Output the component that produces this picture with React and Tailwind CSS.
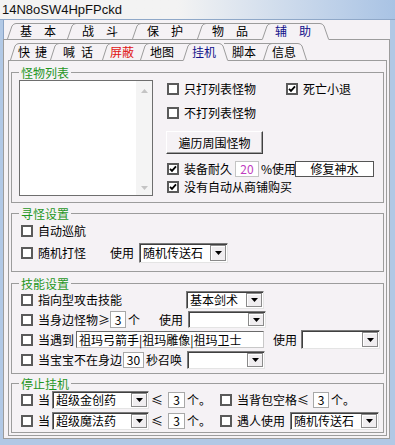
import React from 'react';

const BG = '#f5f2f5';
const LINE = '#9c9c9c';

// one slanted tab; w is the svg width in px, cls carries the matching tailwind width/padding
const Tab = ({ w, h, t, cls, label, color = 'text-black', selected, right, noLeft, spacing = '' }) => {
  const y = t + 0.5;
  let d = noLeft ? `M-4 ${y}` : `M0.5 ${h} L5 ${t + 3} Q6.5 ${y} 9 ${y}`;
  if (right || selected) d += ` L${w - 9} ${y} Q${w - 6.5} ${y} ${w - 5} ${t + 3} L${w - 0.5} ${h}`;
  else d += ` L${w + 9} ${y}`;
  const fill = `M0.5 ${h + 1} L0.5 ${h} L5 ${t + 3} Q6.5 ${y} 9 ${y} L${w - 9} ${y} Q${w - 6.5} ${y} ${w - 5} ${t + 3} L${w - 0.5} ${h} L${w - 0.5} ${h + 1} Z`;
  return (
    <div className={`relative shrink-0 h-full whitespace-nowrap ${cls} ${color}`}>
      <svg className="absolute left-0 top-0 overflow-visible pointer-events-none" width={w} height={h + 1}>
        {selected && <path d={fill} fill={BG} />}
        <path d={d} fill="none" stroke={LINE} strokeWidth="1" />
      </svg>
      <span className={`relative ${spacing}`}>{label}</span>
    </div>
  );
};

const Check = ({ checked }) => (
  <span className="shrink-0 w-[12px] h-[12px] border-2 border-[#5a5a5a] bg-white flex items-center justify-center">
    {checked && (
      <svg width="8" height="8" viewBox="0 0 8 8">
        <path d="M1 3.8 L3 5.9 L7 1.4" fill="none" stroke="#000" strokeWidth="1.8" />
      </svg>
    )}
  </span>
);

const CheckLabel = ({ checked, children }) => (
  <>
    <Check checked={checked} />
    <span className="ml-[5px] whitespace-nowrap">{children}</span>
  </>
);

const Arrow = ({ color = '#000' }) => (
  <svg width="7" height="4" viewBox="0 0 7 4">
    <path d="M0 0 H7 L3.5 4 Z" fill={color} />
  </svg>
);

const Select = ({ cls, text }) => (
  <div className={`flex shrink-0 bg-white border border-t-[#7a7a7a] border-l-[#7a7a7a] border-b-[#e4e4e4] border-r-[#e4e4e4] shadow-[inset_1px_1px_0_#404040] ${cls}`}>
    <span className="flex-1 pl-[3px] self-center whitespace-nowrap">{text}</span>
    <span className="w-[16px] my-[1px] mr-[1px] bg-[#f0eef0] border border-[#8a8a8a] shadow-[inset_1px_1px_0_#ffffff] flex items-center justify-center">
      <Arrow />
    </span>
  </div>
);

const Field = ({ cls, children }) => (
  <span className={`shrink-0 bg-white border flex items-center justify-center whitespace-nowrap ${cls}`}>
    {children}
  </span>
);

const Sym = ({ children }) => <span className="inline-block w-[12px] text-center shrink-0">{children}</span>;

const Group = ({ title, cls, children }) => (
  <fieldset className={`ml-[2px] w-[373px] shrink-0 border border-[#9c9c9c] min-w-0 ${cls}`}>
    <legend className="ml-[7px] px-[2px] text-[#1f961f] leading-[15px]">{title}</legend>
    {children}
  </fieldset>
);

export default function App() {
  return (
    <div className="w-[395px] h-[445px] overflow-hidden bg-[#f5f2f5] flex flex-col font-['Noto_Sans_CJK_SC','Liberation_Sans',sans-serif] text-[12px] leading-[14px] text-black">
      <div className="h-[20px] shrink-0 bg-linear-to-r from-[#f3f3f3] from-45% to-[#a9c3e4] border-b border-[#8fa8c8] pl-[2px] pt-[2px] font-['Liberation_Sans',sans-serif] text-[13px] leading-[16px] text-[#111]">
        14N8oSW4HpFPckd
      </div>

      <div className="flex-1 flex flex-col border-l-[3px] border-r-[5px] border-b-[6px] border-[#b1c8e5] shadow-[inset_1px_0_0_#8aa3c4]">
        <div className="relative z-10 flex h-[19px] pl-[4px] shrink-0">
          <Tab w={60} h={19} t={3} cls="w-[60px] pl-[13px] pt-[4px]" label="基本" spacing="tracking-[12px]" />
          <Tab w={65} h={19} t={3} cls="w-[65px] pl-[15px] pt-[4px]" label="战斗" spacing="tracking-[12px]" />
          <Tab w={65} h={19} t={3} cls="w-[65px] pl-[15px] pt-[4px]" label="保护" spacing="tracking-[12px]" />
          <Tab w={65} h={19} t={3} cls="w-[65px] pl-[15px] pt-[4px]" label="物品" spacing="tracking-[12px]" />
          <Tab w={67} h={19} t={3} cls="w-[67px] pl-[13px] pt-[4px]" label="辅助" spacing="tracking-[12px]" color="text-[#10108a]" selected />
        </div>

        <div className="flex-1 flex flex-col border border-[#9c9c9c]">
          <div className="relative z-10 flex h-[20px] pl-[6px] shrink-0">
            <Tab w={40} h={20} t={3} cls="w-[40px] pl-[8px] pt-[5px]" label="快捷" spacing="tracking-[5px]" />
            <Tab w={52} h={20} t={3} cls="w-[52px] pl-[13px] pt-[5px]" label="喊话" spacing="tracking-[6px]" />
            <Tab w={38} h={20} t={3} cls="w-[38px] pl-[8px] pt-[5px]" label="屏蔽" color="text-[#e01414]" />
            <Tab w={43} h={20} t={3} cls="w-[43px] pl-[10px] pt-[5px]" label="地图" />
            <Tab w={45} h={20} t={3} cls="w-[45px] pl-[9px] pt-[5px]" label="挂机" color="text-[#10108a]" selected />
            <Tab w={35} h={20} t={3} cls="w-[35px] pl-[4px] pt-[5px]" label="脚本" noLeft />
            <Tab w={44} h={20} t={3} cls="w-[44px] pl-[9px] pt-[5px]" label="信息" right />
          </div>

          <div className="flex-1 flex flex-col ml-[4px] mr-[2px] mb-[2px] border border-[#9c9c9c]">
            {/* 怪物列表 */}
            <Group title="怪物列表" cls="mt-[4px] h-[138px]">
              <div className="flex items-start">
                <div className="ml-[7px] w-[134px] h-[116px] bg-white border border-[#6e6e6e] flex justify-end shrink-0">
                  <div className="w-[16px] h-full bg-[#f4f4f4] flex flex-col justify-between items-center pt-[8px] pb-[5px]">
                    <svg width="7" height="4" viewBox="0 0 7 4"><path d="M0 4 H7 L3.5 0 Z" fill="#c4c4c4" /></svg>
                    <Arrow color="#c4c4c4" />
                  </div>
                </div>

                <div className="ml-[13px] flex flex-col">
                  <div className="mt-[1px] h-[16px] flex items-center">
                    <div className="w-[120px] pl-[1px] flex items-center">
                      <CheckLabel>只打列表怪物</CheckLabel>
                    </div>
                    <CheckLabel checked>死亡小退</CheckLabel>
                  </div>
                  <div className="mt-[8px] h-[16px] pl-[1px] flex items-center">
                    <CheckLabel>不打列表怪物</CheckLabel>
                  </div>
                  <div className="mt-[10px] w-[97px] h-[23px] border border-t-white border-l-white border-r-[#404040] border-b-[#404040] shadow-[inset_-1px_-1px_0_#a0a0a0] flex items-center justify-center">
                    遍历周围怪物
                  </div>
                  <div className="mt-[7px] h-[16px] pl-[1px] flex items-center">
                    <CheckLabel checked>装备耐久</CheckLabel>
                    <Field cls="ml-[3px] w-[24px] h-[16px] border-[#c4c4c4] text-[#c03cc0]">20</Field>
                    <span className="ml-[2px] w-[34px] whitespace-nowrap">%使用</span>
                    <Field cls="w-[79px] h-[16px] border-[#555555]">修复神水</Field>
                  </div>
                  <div className="mt-[2px] h-[16px] pl-[1px] flex items-center">
                    <CheckLabel checked>没有自动从商铺购买</CheckLabel>
                  </div>
                </div>
              </div>
            </Group>

            {/* 寻怪设置 */}
            <Group title="寻怪设置" cls="mt-[3px] h-[66px]">
              <div className="mt-[2px] h-[16px] pl-[9px] flex items-center">
                <CheckLabel>自动巡航</CheckLabel>
              </div>
              <div className="mt-[4px] h-[20px] pl-[9px] flex items-center">
                <div className="w-[89px] flex items-center">
                  <CheckLabel>随机打怪</CheckLabel>
                </div>
                <span className="w-[24px]">使用</span>
                <Select cls="ml-[5px] w-[89px] h-[20px]" text="随机传送石" />
              </div>
            </Group>

            {/* 技能设置 */}
            <Group title="技能设置" cls="mt-[4px] h-[98px]">
              <div className="h-[18px] pl-[9px] flex items-center">
                <div className="w-[165px] flex items-center">
                  <CheckLabel>指向型攻击技能</CheckLabel>
                </div>
                <Select cls="w-[78px] h-[18px]" text="基本剑术" />
              </div>
              <div className="mt-[2px] h-[17px] pl-[9px] flex items-center">
                <CheckLabel>
                  当身边怪物<Sym>≥</Sym>
                </CheckLabel>
                <Field cls="w-[16px] h-[17px] border-[#a8a8a8]">3</Field>
                <span className="ml-[2px]">个</span>
                <span className="ml-[19px]">使用</span>
                <Select cls="ml-[5px] w-[78px] h-[17px]" text="" />
              </div>
              <div className="mt-[2px] h-[19px] pl-[9px] flex items-center">
                <CheckLabel>当遇到</CheckLabel>
                <Field cls="ml-[2px] w-[188px] h-[17px] border-t-[#6a6a6a] border-l-[#6a6a6a] border-b-[#c8c8c8] border-r-[#c8c8c8] !justify-start pl-[2px]">
                  祖玛弓箭手|祖玛雕像|祖玛卫士
                </Field>
                <span className="ml-[9px]">使用</span>
                <Select cls="ml-[4px] w-[79px] h-[19px]" text="" />
              </div>
              <div className="mt-[2px] h-[18px] pl-[9px] flex items-center">
                <CheckLabel>当宝宝不在身边</CheckLabel>
                <Field cls="ml-[1px] w-[21px] h-[16px] border-[#a8a8a8]">30</Field>
                <span className="ml-[2px]">秒召唤</span>
                <Select cls="ml-[5px] w-[78px] h-[18px]" text="" />
              </div>
            </Group>

            {/* 停止挂机 */}
            <Group title="停止挂机" cls="mt-[2px] h-[57px]">
              <div className="h-[18px] pl-[9px] flex items-center">
                <div className="w-[199px] flex items-center">
                  <CheckLabel>当</CheckLabel>
                  <Select cls="ml-[2px] w-[97px] h-[18px]" text="超级金创药" />
                  <span className="ml-[2px]"><Sym>≤</Sym></span>
                  <Field cls="ml-[5px] w-[17px] h-[16px] border-[#a8a8a8]">3</Field>
                  <span className="ml-[2px]">个。</span>
                </div>
                <CheckLabel>
                  当背包空格<Sym>≤</Sym>
                </CheckLabel>
                <Field cls="ml-[4px] w-[16px] h-[16px] border-[#a8a8a8]">3</Field>
                <span className="ml-[2px]">个。</span>
              </div>
              <div className="mt-[3px] h-[18px] pl-[9px] flex items-center">
                <div className="w-[199px] flex items-center">
                  <CheckLabel>当</CheckLabel>
                  <Select cls="ml-[2px] w-[97px] h-[18px]" text="超级魔法药" />
                  <span className="ml-[2px]"><Sym>≤</Sym></span>
                  <Field cls="ml-[5px] w-[17px] h-[16px] border-[#a8a8a8]">3</Field>
                  <span className="ml-[2px]">个。</span>
                </div>
                <CheckLabel>遇人使用</CheckLabel>
                <Select cls="ml-[5px] w-[89px] h-[18px]" text="随机传送石" />
              </div>
            </Group>
          </div>
        </div>
      </div>
    </div>
  );
}
